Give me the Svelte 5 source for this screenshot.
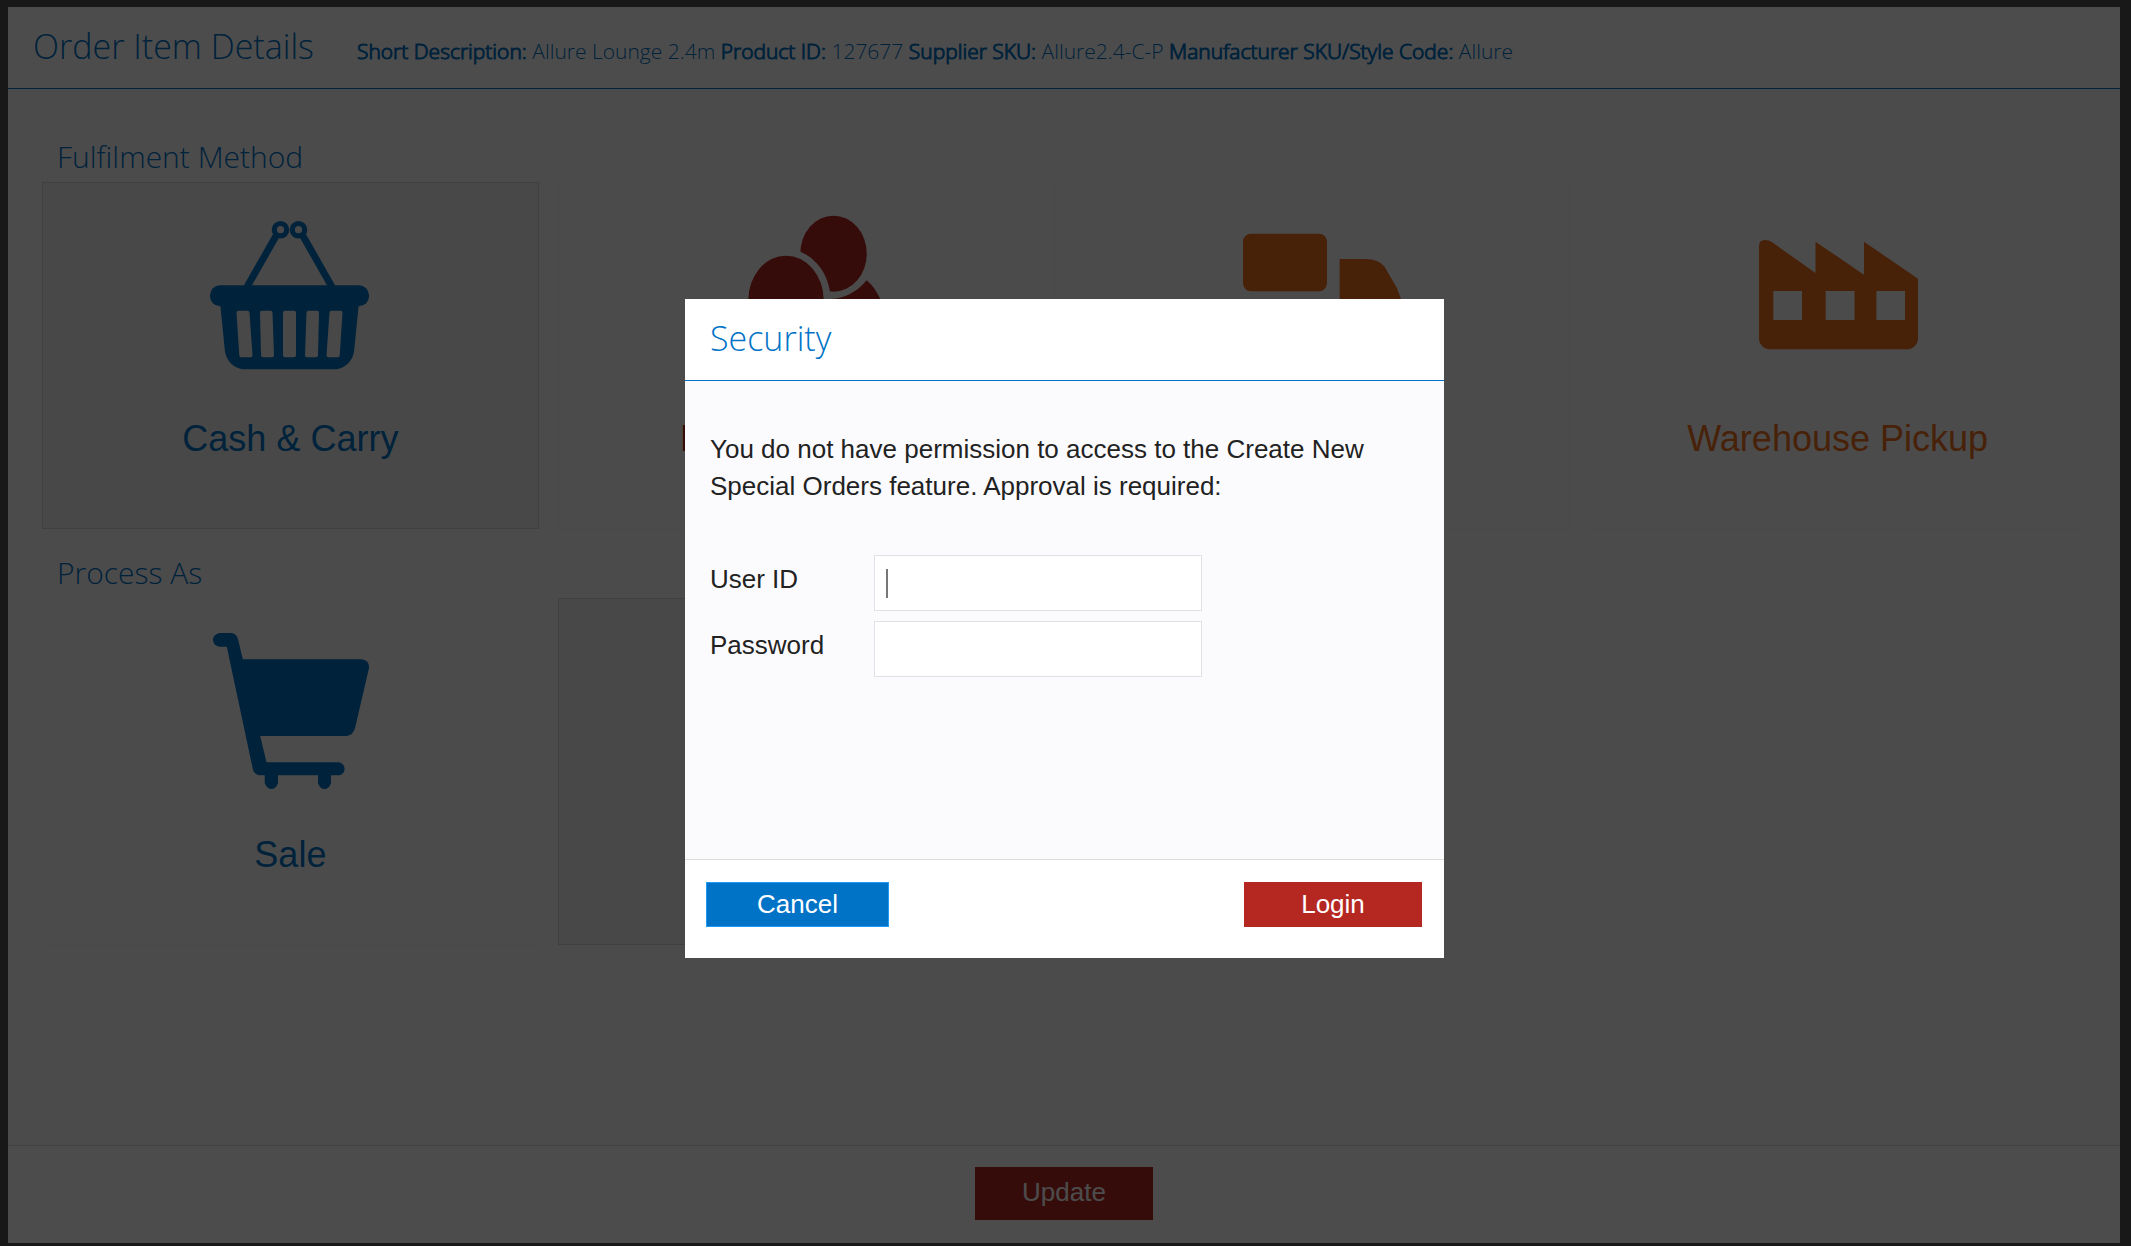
<script lang="ts">
	let userId = $state('')
	let password = $state('')
	let fulfilment = $state('cash')
	let process = $state('special')
	let showSecurity = $state(true)

	const details = [
		{ name: 'Short Description:', value: 'Allure Lounge 2.4m' },
		{ name: 'Product ID:', value: '127677' },
		{ name: 'Supplier SKU:', value: 'Allure2.4-C-P' },
		{ name: 'Manufacturer SKU/Style Code:', value: 'Allure' }
	]

	const fulfilmentMethods = [
		{ id: 'cash', label: 'Cash & Carry', icon: 'basket', tone: 'blue' },
		{ id: 'reserve', label: 'Reserve Pickup', icon: 'people', tone: 'red' },
		{ id: 'delivery', label: 'Home Delivery', icon: 'truck', tone: 'orange' },
		{ id: 'warehouse', label: 'Warehouse Pickup', icon: 'factory', tone: 'orange' }
	]

	const processTypes = [
		{ id: 'sale', label: 'Sale', icon: 'cart', tone: 'blue' },
		{ id: 'special', label: 'Special Order', icon: 'box', tone: 'red' }
	]

	function close() {
		showSecurity = false
	}
</script>

{#snippet icon(name: string)}
	<svg class="icon" viewBox="0 0 160 160" aria-hidden="true">
		{#if name === 'basket'}
			<g fill="none" stroke="currentColor">
				<circle cx="70.5" cy="14.7" r="6.2" stroke-width="5.2" />
				<circle cx="88.5" cy="14.7" r="6.2" stroke-width="5.2" />
				<path d="M66 21L37 72M93 21L122 72" stroke-width="7" />
			</g>
			<rect x="0" y="70.3" width="159" height="21" rx="10" />
			<path d="M10.3 90L15 137Q18 151 32 154.3H127Q141 151 144 137L148.700 90Z" />
			<g class="hole">
				<path d="M28.500 97.700H37.500L40.500 140.300H31.300Z" />
				<path d="M52 97.700H60.500L62 140.300H53Z" />
				<path d="M75 97.700H84V140.300H75Z" />
				<path d="M107 97.700H98.500L97 140.300H106Z" />
				<path d="M130.500 97.700H121.500L118.500 140.300H127.700Z" />
			</g>
		{:else if name === 'people'}
			<path d="M140.700 65.300Q150 73 156 88L160 120H100L104.700 84Q126 83 140.700 65.300Z" />
			<ellipse cx="107.500" cy="38.700" rx="33.300" ry="38" />
			<ellipse class="gap" cx="60" cy="85" rx="44.500" ry="51" />
			<ellipse cx="60" cy="85" rx="37.700" ry="44.300" />
			<path d="M2 158Q4 118 34 118Q60 146 86 118Q116 118 118 158Z" />
		{:else if name === 'truck'}
			<rect x="1" y="18.700" width="84" height="57.600" rx="8" />
			<path d="M97.600 44H123Q137 44 142.600 51.700L155 73.300L159 84V118H97.600Z" />
			<rect x="1" y="88" width="158" height="34" rx="4" />
			<circle cx="38" cy="126" r="14" />
			<circle cx="122" cy="126" r="14" />
		{:else if name === 'factory'}
			<path
				fill-rule="evenodd"
				d="M1 31Q1 25 7 25Q11 25 14.200 27.300L57.500 58V26.700L106 59.700V26.700L160 63.700V125Q158.500 132.500 151 134.300H10Q2.500 132.500 1 125ZM15.300 76V105H44V76ZM67.700 76V105H96.500V76ZM118.400 76V105H147V76Z"
			/>
		{:else if name === 'cart'}
			<path
				d="M9.500 2H21Q26.500 2.500 28 8L32.800 28.300H151Q159.500 29 159 37L145 97.300Q143 104 137 105H50.200L56.500 131.300H129Q134.600 133 134.600 138T129 144.300H121V152Q119 158 114.500 158T108 152V144.300H68V152Q66 158 61.500 158T54.700 152V144.300H49Q44.500 143.500 43 139L16.800 15.700H9.500Q3 14.500 3 9T9.500 2Z"
			/>
		{:else}
			<path d="M20 50L80 20L140 50V120L80 150L20 120Z" />
		{/if}
	</svg>
{/snippet}

{#snippet card(item: any, selected: boolean, pick: () => void)}
	<button type="button" class="card {item.tone}" class:selected aria-pressed={selected} onclick={pick}>
		{@render icon(item.icon)}
		<span>{item.label}</span>
	</button>
{/snippet}

<div class="page">
	<main class="panel">
		<header>
			<h1>Order Item Details</h1>
			<p class="details">
				{#each details as d}
					<strong>{d.name}</strong> {d.value}{' '}
				{/each}
			</p>
		</header>

		<div class="content">
			<section>
				<h2>Fulfilment Method</h2>
				<div class="cards">
					{#each fulfilmentMethods as item}
						{@render card(item, fulfilment === item.id, () => (fulfilment = item.id))}
					{/each}
				</div>
			</section>

			<section>
				<h2>Process As</h2>
				<div class="cards">
					{#each processTypes as item}
						{@render card(item, process === item.id, () => (process = item.id))}
					{/each}
				</div>
			</section>
		</div>

		<footer class="panel-footer">
			<button type="button" class="btn primary tall">Update</button>
		</footer>
	</main>
</div>

{#if showSecurity}
	<div class="backdrop">
		<form class="modal" role="dialog" aria-modal="true" aria-labelledby="security-title" onsubmit={(e) => e.preventDefault()}>
			<header>
				<h1 id="security-title">Security</h1>
			</header>

			<div class="modal-body">
				<p>You do not have permission to access to the Create New Special Orders feature. Approval is required:</p>

				<div class="fields">
					<label for="user-id">User ID</label>
					<div class="field">
						<input id="user-id" type="text" autocomplete="off" bind:value={userId} />
						{#if !userId}<i class="caret"></i>{/if}
					</div>
					<label for="password">Password</label>
					<div class="field">
						<input id="password" type="password" autocomplete="off" bind:value={password} />
					</div>
				</div>
			</div>

			<footer class="modal-footer">
				<button type="button" class="btn cancel" onclick={close}>Cancel</button>
				<button type="submit" class="btn primary">Login</button>
			</footer>
		</form>
	</div>
{/if}

<style>
	:global(body) {
		background: #505050;
	}

	.page,
	.backdrop {
		--blue: #0073c7;
		--red: #b52822;
		--orange: #f07020;
		--body: #fbfbfd;
		box-sizing: border-box;
		font-family: "Liberation Sans", Arial, sans-serif;
		color: #222;
	}

	.page {
		display: flex;
		min-height: 100vh;
		padding: 7px 11px 3px 8px;
	}

	.panel {
		flex: 1;
		display: flex;
		flex-direction: column;
		background: #fff;
	}

	header {
		display: flex;
		align-items: baseline;
		gap: 43px;
		padding: 0 25px 3px;
		border-bottom: 1px solid var(--blue);
		color: var(--blue);
		font-family: "Open Sans", "Noto Sans", sans-serif;
		font-weight: 300;
	}

	h1 {
		margin: 0;
		font-size: 34px;
		font-weight: 300;
		line-height: 78px;
	}

	.details {
		margin: 0;
		font-size: 21px;
	}

	.details strong {
		font-weight: 300;
		-webkit-text-stroke: 1px currentColor;
	}

	.content {
		flex: 1;
		padding: 48px 34px 24px;
		background: var(--body);
	}

	section + section {
		margin-top: 24px;
	}

	h2 {
		margin: 0 0 5px;
		padding-left: 15px;
		color: var(--blue);
		font: 300 30px/40px "Open Sans", "Noto Sans", sans-serif;
	}

	.cards {
		display: grid;
		grid-template-columns: repeat(4, 1fr);
		gap: 19px;
	}

	.card {
		--card-bg: var(--body);
		box-sizing: border-box;
		display: flex;
		flex-direction: column;
		align-items: center;
		gap: 44px;
		min-height: 347px;
		padding: 32px 0;
		border: 1px solid #f5f5f7;
		background: var(--card-bg);
		font: 36px/40px "Liberation Sans", Arial, sans-serif;
		cursor: pointer;
	}

	.card.selected {
		--card-bg: #f0f0f0;
		border-color: #d6d6d8;
	}

	.blue {
		color: var(--blue);
	}

	.red {
		color: var(--red);
	}

	.orange {
		color: var(--orange);
	}

	.icon {
		width: 160px;
		height: 160px;
		fill: currentColor;
	}

	.hole {
		fill: var(--card-bg);
		stroke: var(--card-bg);
		stroke-width: 4;
		stroke-linejoin: round;
	}

	.gap {
		fill: var(--card-bg);
	}

	.panel-footer {
		display: flex;
		justify-content: center;
		padding: 21px 24px 23px;
		border-top: 1px solid #ddd;
	}

	.btn {
		width: 178px;
		height: 45px;
		padding: 0;
		border: 0;
		color: #fff;
		font: 26px/37px "Liberation Sans", Arial, sans-serif;
		cursor: pointer;
	}

	.btn.tall {
		height: 53px;
		padding-bottom: 2px;
	}

	.btn.primary {
		background: var(--red);
	}

	.btn.cancel {
		width: 183px;
		border: 1px solid #1e9bf5;
		background: var(--blue);
	}

	.backdrop {
		position: fixed;
		inset: 0;
		display: flex;
		align-items: flex-start;
		justify-content: center;
		padding: 24vh 2px 0 0;
		background: rgba(0, 0, 0, .7);
	}

	.modal {
		width: 759px;
		max-width: 100%;
		background: #fff;
	}

	.modal-body {
		min-height: 378px;
		padding: 50px 25px;
		background: var(--body);
	}

	.modal-body p {
		margin: 0 0 50px;
	}

	.modal-body,
	.modal-body input {
		font-size: 26px;
		line-height: 37px;
	}

	.fields {
		display: grid;
		grid-template-columns: 164px 328px;
		row-gap: 10px;
	}

	label {
		padding-top: 6px;
	}

	.field {
		position: relative;
	}

	input {
		box-sizing: border-box;
		width: 100%;
		height: 56px;
		padding: 0 12px;
		border: 1px solid #e0e0e8;
		background: #fff;
		color: inherit;
		font-family: inherit;
		display: block;
		outline: none;
	}

	.caret {
		position: absolute;
		top: 14px;
		left: 12px;
		width: 2px;
		height: 29px;
		background: #777;
	}

	.modal-footer {
		display: flex;
		justify-content: space-between;
		padding: 22px 22px 31px 21px;
		border-top: 1px solid #ddd;
	}
</style>
